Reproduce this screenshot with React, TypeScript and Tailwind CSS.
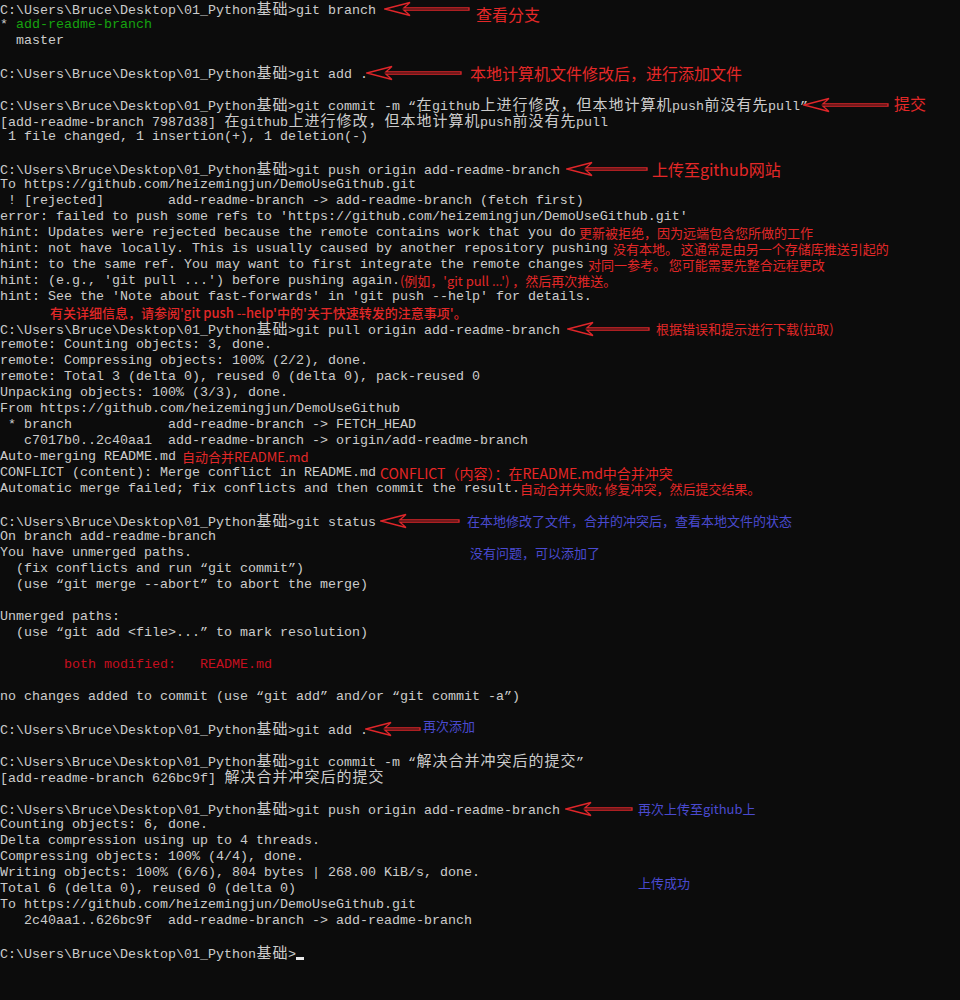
import React from "react";

const P = "C:\\Users\\Bruce\\Desktop\\01_Python基础>";

const SANS = "font-['Noto_Sans_CJK_SC',sans-serif] whitespace-nowrap";
const RED_S = SANS + " text-[13px] leading-[16px] text-[#e22828]";
const RED_B = SANS + " text-[16px] leading-[16px] text-[#e42828]";
const BLUE_S = SANS + " text-[13px] leading-[16px] text-[#4a4ad0]";

function isWide(ch: string) {
  const c = ch.codePointAt(0) || 0;
  return c >= 0x2e80;
}

function Mixed({ text }: { text: string }) {
  const out: React.ReactNode[] = [];
  let buf = "";
  let k = 0;
  for (const ch of text) {
    if (isWide(ch)) {
      if (buf) {
        out.push(<span key={k++}>{buf}</span>);
        buf = "";
      }
      out.push(
        <span
          key={k++}
          className="inline-block w-[16px] text-center font-['Noto_Sans_CJK_SC',sans-serif] text-[15px] leading-[16px]"
        >
          {ch}
        </span>
      );
    } else buf += ch;
  }
  if (buf) out.push(<span key={k++}>{buf}</span>);
  return <>{out}</>;
}

function Arrow({ w, className }: { w: number; className: string }) {
  const pts = `1,8 26,1.5 20,6.8 ${w - 1},6.8 ${w - 1},9.2 20,9.2 26,14.5`;
  return (
    <svg className={"shrink-0 " + className} width={w} height={16} viewBox={`0 0 ${w} 16`}>
      <polygon points={pts} fill="none" stroke="#e0262a" strokeWidth={1.3} strokeLinejoin="miter" />
    </svg>
  );
}

function Row({ children }: { children?: React.ReactNode }) {
  return <div className="h-[16px] whitespace-pre flex items-center">{children}</div>;
}

function L({ t, c }: { t: string; c?: string }) {
  return (
    <span className={c}>
      <Mixed text={t} />
    </span>
  );
}

export default function App() {
  return (
    <div className="w-[960px] h-[1000px] overflow-hidden bg-[#0c0c0c] text-[#cccccc] font-['Liberation_Mono',monospace] text-[13.333px] leading-[16px]">
      <div className="flex flex-col pt-[1px]">
        <Row>
          <L t={P + "git branch"} />
          <Arrow w={86} className="ml-[8px]" />
          <span className={RED_B + " ml-[6px] relative top-[5px]"}>查看分支</span>
        </Row>
        <Row>
          <L t="* " />
          <L t="add-readme-branch" c="text-[#16a30f]" />
        </Row>
        <Row>
          <L t="  master" />
        </Row>
        <Row />
        <Row>
          <L t={P + "git add ."} />
          <Arrow w={96} className="ml-[-2px]" />
          <span className={RED_B + " ml-[8px]"}>本地计算机文件修改后，进行添加文件</span>
        </Row>
        <Row />
        <Row>
          <L t={P + "git commit -m “在github上进行修改，但本地计算机push前没有先pull”"} />
          <Arrow w={86} className="ml-[-5px]" />
          <span className={RED_B + " ml-[5px] relative top-[-2px]"}>提交</span>
        </Row>
        <Row>
          <L t="[add-readme-branch 7987d38] 在github上进行修改，但本地计算机push前没有先pull" />
        </Row>
        <Row>
          <L t=" 1 file changed, 1 insertion(+), 1 deletion(-)" />
        </Row>
        <Row />
        <Row>
          <L t={P + "git push origin add-readme-branch"} />
          <Arrow w={82} className="ml-[6px]" />
          <span className={RED_B + " ml-[4px]"}>上传至github网站</span>
        </Row>
        <Row>
          <L t="To https://github.com/heizemingjun/DemoUseGithub.git" />
        </Row>
        <Row>
          <L t=" ! [rejected]        add-readme-branch -> add-readme-branch (fetch first)" />
        </Row>
        <Row>
          <L t="error: failed to push some refs to 'https://github.com/heizemingjun/DemoUseGithub.git'" />
        </Row>
        <Row>
          <L t="hint: Updates were rejected because the remote contains work that you do" />
          <span className={RED_S + " ml-[3px]"}>更新被拒绝，因为远端包含您所做的工作</span>
        </Row>
        <Row>
          <L t="hint: not have locally. This is usually caused by another repository pushing" />
          <span className={RED_S + " ml-[5px]"}>没有本地。 这通常是由另一个存储库推送引起的</span>
        </Row>
        <Row>
          <L t="hint: to the same ref. You may want to first integrate the remote changes" />
          <span className={RED_S + " ml-[4px]"}>对同一参考。 您可能需要先整合远程更改</span>
        </Row>
        <Row>
          <L t="hint: (e.g., 'git pull ...') before pushing again." />
          <span className={RED_S}>(例如，'git pull ...') ，然后再次推送。</span>
        </Row>
        <Row>
          <L t="hint: See the 'Note about fast-forwards' in 'git push --help' for details." />
        </Row>
        <Row>
          <span className={RED_S + " ml-[50px] font-medium"}>
            有关详细信息，请参阅'git push --help'中的'关于快速转发的注意事项'。
          </span>
        </Row>
        <Row>
          <L t={P + "git pull origin add-readme-branch"} />
          <Arrow w={83} className="ml-[7px]" />
          <span className={RED_S + " ml-[6px]"}>根据错误和提示进行下载(拉取)</span>
        </Row>
        <Row>
          <L t="remote: Counting objects: 3, done." />
        </Row>
        <Row>
          <L t="remote: Compressing objects: 100% (2/2), done." />
        </Row>
        <Row>
          <L t="remote: Total 3 (delta 0), reused 0 (delta 0), pack-reused 0" />
        </Row>
        <Row>
          <L t="Unpacking objects: 100% (3/3), done." />
        </Row>
        <Row>
          <L t="From https://github.com/heizemingjun/DemoUseGithub" />
        </Row>
        <Row>
          <L t=" * branch            add-readme-branch -> FETCH_HEAD" />
        </Row>
        <Row>
          <L t="   c7017b0..2c40aa1  add-readme-branch -> origin/add-readme-branch" />
        </Row>
        <Row>
          <L t="Auto-merging README.md" />
          <span className={RED_S + " ml-[6px]"}>自动合并README.md</span>
        </Row>
        <Row>
          <L t="CONFLICT (content): Merge conflict in README.md" />
          <span className={SANS + " ml-[4px] text-[14px] leading-[16px] text-[#e82626]"}>
            CONFLICT（内容）：在README.md中合并冲突
          </span>
        </Row>
        <Row>
          <L t="Automatic merge failed; fix conflicts and then commit the result." />
          <span className={RED_S}>自动合并失败; 修复冲突，然后提交结果。</span>
        </Row>
        <Row />
        <Row>
          <L t={P + "git status"} />
          <Arrow w={80} className="ml-[4px]" />
          <span className={BLUE_S + " ml-[7px]"}>在本地修改了文件，合并的冲突后，查看本地文件的状态</span>
        </Row>
        <Row>
          <L t="On branch add-readme-branch" />
        </Row>
        <Row>
          <L t="You have unmerged paths." />
          <span className={BLUE_S + " ml-[278px]"}>没有问题，可以添加了</span>
        </Row>
        <Row>
          <L t="  (fix conflicts and run “git commit”)" />
        </Row>
        <Row>
          <L t="  (use “git merge --abort” to abort the merge)" />
        </Row>
        <Row />
        <Row>
          <L t="Unmerged paths:" />
        </Row>
        <Row>
          <L t="  (use “git add <file>...” to mark resolution)" />
        </Row>
        <Row />
        <Row>
          <L t="        " />
          <L t="both modified:   README.md" c="text-[#c50f1f]" />
        </Row>
        <Row />
        <Row>
          <L t="no changes added to commit (use “git add” and/or “git commit -a”)" />
        </Row>
        <Row />
        <Row>
          <L t={P + "git add ."} />
          <Arrow w={56} className="ml-[-3px]" />
          <span className={BLUE_S + " ml-[2px] relative top-[-3px]"}>再次添加</span>
        </Row>
        <Row />
        <Row>
          <L t={P + "git commit -m “解决合并冲突后的提交”"} />
        </Row>
        <Row>
          <L t="[add-readme-branch 626bc9f] 解决合并冲突后的提交" />
        </Row>
        <Row />
        <Row>
          <L t={P + "git push origin add-readme-branch"} />
          <Arrow w={68} className="ml-[5px]" />
          <span className={BLUE_S + " ml-[5px]"}>再次上传至github上</span>
        </Row>
        <Row>
          <L t="Counting objects: 6, done." />
        </Row>
        <Row>
          <L t="Delta compression using up to 4 threads." />
        </Row>
        <Row>
          <L t="Compressing objects: 100% (4/4), done." />
        </Row>
        <Row>
          <L t="Writing objects: 100% (6/6), 804 bytes | 268.00 KiB/s, done." />
        </Row>
        <Row>
          <L t="Total 6 (delta 0), reused 0 (delta 0)" />
          <span className={BLUE_S + " ml-[342px] relative top-[-6px]"}>上传成功</span>
        </Row>
        <Row>
          <L t="To https://github.com/heizemingjun/DemoUseGithub.git" />
        </Row>
        <Row>
          <L t="   2c40aa1..626bc9f  add-readme-branch -> add-readme-branch" />
        </Row>
        <Row />
        <Row>
          <L t={P} />
          <span className="relative inline-block w-[8px] h-[16px]">
            <span className="absolute left-0 bottom-[1px] w-[8px] h-[3px] bg-[#e8e8e8]" />
          </span>
        </Row>
      </div>
    </div>
  );
}
